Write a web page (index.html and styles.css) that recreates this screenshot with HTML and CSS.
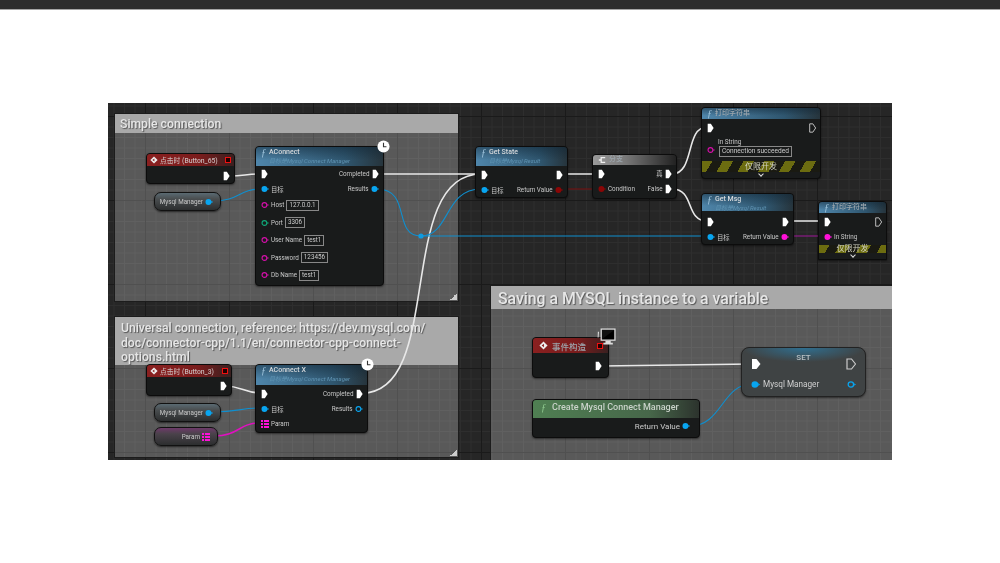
FILE: index.html
```html
<!DOCTYPE html>
<html lang="zh">
<head>
  <meta charset="UTF-8">
  <title>Mysql Connect Blueprint</title>
  <link rel="stylesheet" href="styles.css">
</head>
<body>
  <div class="topbar"></div>

  <svg class="defs" width="0" height="0">
    <symbol id="exec" viewBox="0 0 10 12" preserveAspectRatio="none"><path d="M1 1h4.5L9.5 6 5.5 11H1z" fill="#fff"/></symbol>
    <symbol id="exec-off" viewBox="0 0 10 12" preserveAspectRatio="none"><path d="M1 1h4.5L9.5 6 5.5 11H1z" fill="none" stroke="#ccc" stroke-width="1.2"/></symbol>
    <symbol id="data" viewBox="0 0 10 10"><circle cx="4.3" cy="5" r="3.7" fill="currentColor"/><path d="M8 3.4 10 5 8 6.6z" fill="currentColor"/></symbol>
    <symbol id="data-off" viewBox="0 0 10 10"><circle cx="4.3" cy="5" r="3" fill="none" stroke="currentColor" stroke-width="1.4"/><path d="M8 3.6 10 5 8 6.4z" fill="currentColor"/></symbol>
    <symbol id="array" viewBox="0 0 10 10"><path d="M0 0h2.5v2.5H0zM3.7 0H10v2.5H3.7zM0 3.7h2.5v2.6H0zM3.7 3.7H10v2.6H3.7zM0 7.5h2.5V10H0zM3.7 7.5H10V10H3.7z" fill="currentColor"/></symbol>
    <symbol id="clock" viewBox="0 0 14 14"><circle cx="7" cy="7" r="6.5" fill="#fff"/><path d="M7 3v4.3h3.2" fill="none" stroke="#333" stroke-width="1.2"/></symbol>
    <symbol id="event" viewBox="0 0 10 10"><path d="M5 .5 9.5 5 5 9.5.5 5z" fill="#eee"/><path d="M3 5l2.5-2v4z" fill="#8a1d1d"/></symbol>
  </svg>

  <div class="canvas">
    <div class="comment simple">
      <div class="comment-title">Simple connection</div>
      <span class="grip"></span>
    </div>
    <div class="comment universal">
      <div class="comment-title">Universal connection, reference: https://dev.mysql.com/<br>doc/connector-cpp/1.1/en/connector-cpp-connect-<br>options.html</div>
      <span class="grip"></span>
    </div>
    <div class="comment saving">
      <div class="comment-title">Saving a MYSQL instance to a variable</div>
    </div>

    <svg class="wires" width="784" height="357" viewBox="108 103 784 357">
      <g fill="none" stroke="#e8e8e8" stroke-width="1.6">
        <path d="M229 176C245 176 245 174 261 174"/>
        <path d="M378 174H481"/>
        <path d="M224 386C243 386 243 393 262 393"/>
        <path d="M362 393C445 393 395 174 481 174"/>
        <path d="M562 174H598"/>
        <path d="M672 174C695 174 685 127 707 127"/>
        <path d="M672 189C695 189 685 221 707 221"/>
        <path d="M789 221H825"/>
        <path d="M601 366L752 364"/>
      </g>
      <g fill="none" stroke="#0f8fcf" stroke-width="1.1">
        <path d="M213 201C240 201 238 189 262 189"/>
        <path d="M377 189C412 189 392 236 421 236C450 236 444 189 481 189"/>
        <path d="M421 236H708"/>
        <path d="M213 412C240 412 238 408 262 408"/>
        <path d="M690 426C722 426 722 384 752 384"/>
      </g>
      <circle cx="421" cy="236" r="2.6" fill="#0f9be0"/>
      <path d="M565 189H599" stroke="#7a0f0f" fill="none"/>
      <path d="M789 236H825" stroke="#a0169a" fill="none" stroke-width="1.2"/>
      <path d="M213 436C240 436 238 423 260 423" stroke="#e010c0" fill="none" stroke-width="1.5"/>
    </svg>

    <div class="node click-65 red">
      <div class="head event-head">
        <svg class="event-icon"><use href="#event"/></svg>
        <span>点击时 (Button_65)</span>
        <i class="stop"></i>
      </div>
      <div class="rows">
        <div class="row"><span></span><svg class="pin"><use href="#exec"/></svg></div>
      </div>
    </div>

    <div class="var manager-1"><span>Mysql Manager</span><svg class="dot blue"><use href="#data"/></svg></div>

    <div class="node aconnect blue-head">
      <svg class="clock"><use href="#clock"/></svg>
      <div class="head">
        <div class="title"><em>ƒ</em>AConnect</div>
        <div class="sub">目标是Mysql Connect Manager</div>
      </div>
      <div class="rows">
        <div class="row"><svg class="pin"><use href="#exec"/></svg><span class="cell">Completed <svg class="pin"><use href="#exec"/></svg></span></div>
        <div class="row"><span class="cell"><svg class="dot blue"><use href="#data"/></svg> 目标</span><span class="cell">Results <svg class="dot blue"><use href="#data"/></svg></span></div>
        <div class="row tall"><span class="cell"><svg class="dot pink"><use href="#data-off"/></svg> Host <b class="field">127.0.0.1</b></span></div>
        <div class="row tall"><span class="cell"><svg class="dot green"><use href="#data-off"/></svg> Port <b class="field">3306</b></span></div>
        <div class="row tall"><span class="cell"><svg class="dot pink"><use href="#data-off"/></svg> User Name <b class="field">test1</b></span></div>
        <div class="row tall"><span class="cell"><svg class="dot pink"><use href="#data-off"/></svg> Password <b class="field">123456</b></span></div>
        <div class="row tall"><span class="cell"><svg class="dot pink"><use href="#data-off"/></svg> Db Name <b class="field">test1</b></span></div>
      </div>
    </div>

    <div class="node click-3 red">
      <div class="head event-head">
        <svg class="event-icon"><use href="#event"/></svg>
        <span>点击时 (Button_3)</span>
        <i class="stop"></i>
      </div>
      <div class="rows">
        <div class="row"><span></span><svg class="pin"><use href="#exec"/></svg></div>
      </div>
    </div>

    <div class="var manager-2"><span>Mysql Manager</span><svg class="dot blue"><use href="#data"/></svg></div>
    <div class="var param"><span>Param</span><svg class="dot pink-on"><use href="#array"/></svg></div>

    <div class="node aconnect-x blue-head">
      <svg class="clock"><use href="#clock"/></svg>
      <div class="head">
        <div class="title"><em>ƒ</em>AConnect X</div>
        <div class="sub">目标是Mysql Connect Manager</div>
      </div>
      <div class="rows">
        <div class="row"><svg class="pin"><use href="#exec"/></svg><span class="cell">Completed <svg class="pin"><use href="#exec"/></svg></span></div>
        <div class="row"><span class="cell"><svg class="dot blue"><use href="#data"/></svg> 目标</span><span class="cell">Results <svg class="dot blue"><use href="#data-off"/></svg></span></div>
        <div class="row"><span class="cell"><svg class="dot pink-on"><use href="#array"/></svg> Param</span></div>
      </div>
    </div>

    <div class="node get-state blue-head">
      <div class="head">
        <div class="title"><em>ƒ</em>Get State</div>
        <div class="sub">目标是Mysql Result</div>
      </div>
      <div class="rows">
        <div class="row"><svg class="pin"><use href="#exec"/></svg><svg class="pin"><use href="#exec"/></svg></div>
        <div class="row"><span class="cell"><svg class="dot blue"><use href="#data"/></svg> 目标</span><span class="cell">Return Value <svg class="dot darkred"><use href="#data"/></svg></span></div>
      </div>
    </div>

    <div class="node branch">
      <div class="head">
        <div class="title"><svg class="branch-icon" viewBox="0 0 10 10"><path d="M9 2H4v6h5M1 5h3" fill="none" stroke="#eee" stroke-width="1.6"/></svg><span class="dim">分支</span></div>
      </div>
      <div class="rows">
        <div class="row"><svg class="pin"><use href="#exec"/></svg><span class="cell">真 <svg class="pin"><use href="#exec"/></svg></span></div>
        <div class="row"><span class="cell"><svg class="dot darkred"><use href="#data"/></svg> Condition</span><span class="cell">False <svg class="pin"><use href="#exec"/></svg></span></div>
      </div>
    </div>

    <div class="node print-1 blue-head">
      <div class="head">
        <div class="title"><em>ƒ</em><span class="dim">打印字符串</span></div>
      </div>
      <div class="rows">
        <div class="row"><svg class="pin"><use href="#exec"/></svg><svg class="pin"><use href="#exec-off"/></svg></div>
        <div class="in-string">
          <svg class="dot pink"><use href="#data-off"/></svg>
          <div class="stack">
            <span>In String</span>
            <b class="field wide">Connection succeeded</b>
          </div>
        </div>
      </div>
      <div class="hazard">仅限开发</div>
      <div class="chevron"></div>
    </div>

    <div class="node get-msg blue-head">
      <div class="head">
        <div class="title"><em>ƒ</em>Get Msg</div>
        <div class="sub">目标是Mysql Result</div>
      </div>
      <div class="rows">
        <div class="row"><svg class="pin"><use href="#exec"/></svg><svg class="pin"><use href="#exec"/></svg></div>
        <div class="row"><span class="cell"><svg class="dot blue"><use href="#data"/></svg> 目标</span><span class="cell">Return Value <svg class="dot pink-on"><use href="#data"/></svg></span></div>
      </div>
    </div>

    <div class="node print-2 blue-head">
      <div class="head">
        <div class="title"><em>ƒ</em><span class="dim">打印字符串</span></div>
      </div>
      <div class="rows">
        <div class="row"><svg class="pin"><use href="#exec"/></svg><svg class="pin"><use href="#exec-off"/></svg></div>
        <div class="row"><span class="cell"><svg class="dot pink-on"><use href="#data"/></svg> In String</span></div>
      </div>
      <div class="hazard">仅限开发</div>
      <div class="chevron"></div>
    </div>

    <div class="node construct red">
      <svg class="monitor" viewBox="0 0 18 17">
        <path d="M.8 3.5h1.1L1.5 9H.6z" fill="#ddd"/>
        <rect x="4" y="1" width="13" height="10.5" fill="#111" stroke="#ddd" stroke-width="1.2"/>
        <path d="M5 10.5 16 2v8.5z" fill="#000"/>
        <path d="M8 12h5v2h2v1.5H6V14h2z" fill="#ddd"/>
      </svg>
      <div class="head event-head">
        <svg class="event-icon"><use href="#event"/></svg>
        <span class="dim">事件构造</span>
        <i class="stop"></i>
      </div>
      <div class="rows">
        <div class="row"><span></span><svg class="pin"><use href="#exec"/></svg></div>
      </div>
    </div>

    <div class="node create green-head">
      <div class="head">
        <div class="title"><em>ƒ</em>Create Mysql Connect Manager</div>
      </div>
      <div class="rows">
        <div class="row"><span></span><span class="cell">Return Value <svg class="dot blue"><use href="#data"/></svg></span></div>
      </div>
    </div>

    <div class="node set">
      <div class="set-title">SET</div>
      <div class="rows">
        <div class="row"><svg class="pin big"><use href="#exec"/></svg><svg class="pin big"><use href="#exec-off"/></svg></div>
        <div class="row"><span class="cell"><svg class="dot blue"><use href="#data"/></svg> Mysql Manager</span><svg class="dot blue"><use href="#data-off"/></svg></div>
      </div>
    </div>
  </div>
</body>
</html>
```

FILE: styles.css
```css
body {
  margin: 0;
  background-color: #fff;
  font-family: Roboto, "Noto Sans CJK SC", sans-serif;
}

.topbar {
  height: 9px;
  background-color: #2d2d2d;
  border-bottom: 1px solid #a5a5a5;
}

.defs {
  position: absolute;
}

.canvas {
  position: relative;
  width: 784px;
  height: 357px;
  margin: 93px 0 0 108px;
  overflow: hidden;
  filter: blur(0.35px);
  background-color: #262626;
  background-image:
    linear-gradient(90deg, #1a1a1a 1px, transparent 1px),
    linear-gradient(#1a1a1a 1px, transparent 1px),
    linear-gradient(90deg, #2e2e2e 1px, transparent 1px),
    linear-gradient(#2e2e2e 1px, transparent 1px);
  background-size: 84px 84px, 84px 84px, 10.5px 10.5px, 10.5px 10.5px;
  background-position: 37px 13px, 37px 13px, 37px 13px, 37px 13px;
}

/* comment boxes */
.comment {
  position: absolute;
  background-color: rgba(255, 255, 255, 0.24);
  box-shadow: 0 0 0 1px #1c1c1c;
}

.comment-title {
  background-color: #a9a9a9;
  color: #e6e6e6;
  font-weight: 500;
  white-space: nowrap;
  text-shadow: 1px 1px 1px #555;
}

.simple {
  left: 7px;
  top: 11px;
  width: 343px;
  height: 187px;
}

.simple .comment-title {
  height: 19px;
  padding-left: 5px;
  font-size: 12.2px;
  line-height: 21px;
}

.universal {
  left: 7px;
  top: 214px;
  width: 343px;
  height: 140px;
}

.universal .comment-title {
  height: 48px;
  padding: 4px 0 0 6px;
  box-sizing: border-box;
  font-size: 12.2px;
  line-height: 14.5px;
}

.saving {
  left: 383px;
  top: 183px;
  width: 401px;
  height: 174px;
}

.saving .comment-title {
  height: 23px;
  padding-left: 7px;
  font-size: 15.8px;
  line-height: 25px;
}

.grip {
  position: absolute;
  right: 1px;
  bottom: 1px;
  width: 7px;
  height: 7px;
  background: linear-gradient(135deg, transparent 50%, #ccc 50%);
}

/* wires */
.wires {
  position: absolute;
  left: 0;
  top: 0;
}

/* nodes */
.node {
  position: absolute;
  box-sizing: border-box;
  background-color: #191b1b;
  border: 1px solid #0c0c0c;
  border-radius: 4px;
  color: #c9c9c9;
  font-size: 6.3px;
  white-space: nowrap;
  box-shadow: 0 1px 2px rgba(0, 0, 0, 0.5);
}

.head {
  overflow: hidden;
  border-radius: 3px 3px 0 0;
  padding: 2px 0 0 5px;
}

.title {
  display: flex;
  align-items: center;
  color: #d5d9dc;
  font-size: 7px;
  font-weight: 500;
  line-height: 9px;
}

.title em {
  width: 8px;
  flex: none;
  color: #9fc4dc;
  font-family: "Liberation Serif", serif;
  font-size: 10px;
}

.sub {
  padding-left: 8px;
  color: #5f93b2;
  font-size: 6px;
  font-style: italic;
  line-height: 8px;
}

.dim {
  color: #9ca6ad;
}

.blue-head .head {
  background:
    linear-gradient(180deg, rgba(15, 35, 50, 0.5), rgba(0, 0, 0, 0) 70%),
    linear-gradient(90deg, #4f86ab, #2f566f 70%, #26343c);
}

.green-head .head {
  background: linear-gradient(90deg, #4f7f52, #47674a 70%, #2c332d);
}

.red .head {
  background: linear-gradient(90deg, #8a2020, #7a1c1c 60%, #3a2020);
}

.rows {
  display: flex;
  flex-direction: column;
  padding: 1.5px 4.5px 0 5px;
}

.row {
  display: flex;
  align-items: center;
  justify-content: space-between;
  height: 15px;
}

.row.tall {
  height: 17.5px;
}

.cell {
  display: flex;
  align-items: center;
  gap: 2px;
}

.pin {
  flex: none;
  width: 7px;
  height: 10px;
}

.pin.big {
  width: 10px;
  height: 12px;
}

.dot {
  flex: none;
  width: 8px;
  height: 8px;
}

.blue { color: #08a5f0; }
.pink { color: #d40fa8; }
.pink-on { color: #ff10d8; }
.green { color: #0fa878; }
.darkred { color: #8a0606; }

.field {
  padding: 0 2px;
  border: 1px solid #888;
  color: #ccc;
  font-weight: 400;
  line-height: 9px;
}

.clock {
  position: absolute;
  right: -7px;
  top: -7px;
  width: 13px;
  height: 13px;
}

.event-head {
  display: flex;
  align-items: center;
  gap: 2px;
  height: 12px;
  padding: 0 3px;
  color: #c8b8b8;
  font-size: 6.8px;
  font-weight: 500;
}

.event-head span {
  flex: 1;
}

.event-icon {
  flex: none;
  width: 8px;
  height: 8px;
}

.stop {
  flex: none;
  width: 4px;
  height: 4px;
  border: 1px solid #f01010;
  background-color: #200;
}

/* node places on the graph */
.click-65 { left: 38px; top: 50px; width: 89px; height: 31px; }
.click-65 .rows { padding-top: 2px; }
.aconnect { left: 147px; top: 43px; width: 129px; height: 140px; }
.aconnect .head { height: 18px; padding-top: 1px; }
.aconnect .rows { padding-top: 0.5px; }
.click-3 { left: 38px; top: 261px; width: 86px; height: 32px; }
.aconnect-x { left: 147px; top: 261px; width: 113px; height: 69px; }
.aconnect-x .head { height: 19px; padding-top: 1px; }
.get-state { left: 367px; top: 43px; width: 93px; height: 52px; }
.get-state .head { height: 18px; padding-top: 1px; }
.branch { left: 484px; top: 51px; width: 85px; height: 45px; }
.branch .head { height: 10px; padding-top: 0; background: linear-gradient(90deg, #9a9a9a, #777 40%, #222); }
.branch .rows { padding-top: 1px; }
.branch-icon { width: 8px; height: 8px; margin-right: 3px; }
.print-1 { left: 593px; top: 4px; width: 120px; height: 72px; }
.print-1 .head { height: 10px; padding-top: 1px; }
.get-msg { left: 593px; top: 90px; width: 93px; height: 52px; }
.get-msg .head { height: 16px; padding-top: 1px; }
.get-msg .rows { padding-top: 3.5px; }
.print-2 { left: 710px; top: 98px; width: 69px; height: 59px; border-radius: 4px 4px 0 0; }
.print-2 .head { height: 10px; padding-top: 1px; }
.construct { left: 424px; top: 234px; width: 77px; height: 41px; }
.construct .head { height: 15px; padding: 0 5px 0 6px; gap: 4px; font-size: 8.5px; }
.construct .event-icon { width: 9px; height: 9px; }
.construct .rows { padding-top: 5px; padding-right: 6px; }
.create { left: 424px; top: 296px; width: 168px; height: 39px; }
.create .head { height: 15px; padding-top: 3px; padding-left: 8px; }
.create .title { color: #c9d2c9; font-size: 9px; }
.create .title em { width: 11px; color: #8fc98f; }
.create .cell { font-size: 8px; }
.create .rows { padding-top: 0.5px; padding-right: 9px; }

/* print string parts */
.in-string {
  display: flex;
  align-items: flex-end;
  gap: 3px;
  margin-top: 2px;
}

.in-string .dot {
  margin-bottom: 3px;
}

.stack {
  display: flex;
  flex-direction: column;
  align-items: flex-start;
}

.stack span {
  line-height: 8px;
}

.field.wide {
  margin-left: 1px;
  padding: 0 2px;
  font-size: 6.6px;
  line-height: 9px;
}

.hazard {
  height: 11px;
  margin-top: 4px;
  background: repeating-linear-gradient(120deg, #6c6c10 0 9px, #1a1a12 9px 18px);
  color: #d0d0c0;
  font-size: 8px;
  line-height: 11px;
  text-align: center;
}

.print-2 .hazard {
  height: 8px;
  margin-top: 0;
  line-height: 8px;
}

.chevron {
  width: 3px;
  height: 3px;
  margin: 0 auto;
  border-right: 1px solid #ddd;
  border-bottom: 1px solid #ddd;
  transform: rotate(45deg);
}

/* variable getters */
.var {
  position: absolute;
  display: flex;
  align-items: center;
  justify-content: flex-end;
  gap: 2px;
  box-sizing: border-box;
  padding-right: 7px;
  border: 1px solid #111;
  border-radius: 7px;
  background: linear-gradient(#5a6a72, #4a4e50 35%, #2c2e2f);
  box-shadow: 0 1px 2px rgba(0, 0, 0, 0.6);
  color: #c8c8c8;
  font-size: 6.3px;
  white-space: nowrap;
}

.manager-1 { left: 46px; top: 89px; width: 67px; height: 19px; }
.manager-2 { left: 46px; top: 300px; width: 67px; height: 19px; }
.param {
  left: 46px;
  top: 324px;
  width: 64px;
  height: 19px;
  background: linear-gradient(#6e3a6a, #4a424a 35%, #2c2e2f);
}

/* set node */
.set {
  left: 633px;
  top: 244px;
  width: 125px;
  height: 50px;
  border: 1px solid #222;
  border-radius: 8px;
  background: radial-gradient(ellipse 50% 14px at 50% 0, #2f6f90, transparent), #3f4344;
  color: #d0d0d0;
  font-size: 8.2px;
}

.set .rows {
  padding: 6px 9px 0;
}

.set .row {
  height: 20px;
}

.set .cell {
  gap: 3px;
}

.set .dot {
  width: 9px;
  height: 9px;
}

.set-title {
  position: absolute;
  left: 0;
  right: 0;
  top: 5px;
  color: #b8c0c4;
  font-size: 8px;
  font-weight: 500;
  text-align: center;
}

.monitor {
  position: absolute;
  right: -8px;
  top: -10px;
  width: 19px;
  height: 18px;
}
```
